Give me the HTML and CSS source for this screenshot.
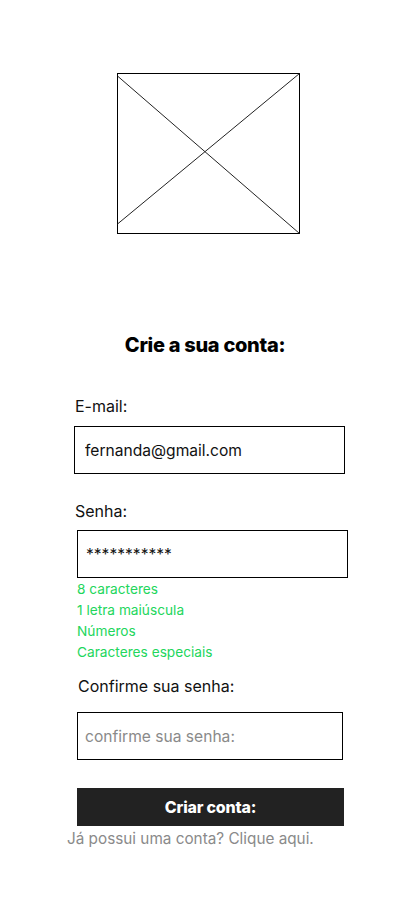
FILE: index.html
```html
<!DOCTYPE html>
<html lang="pt-BR">
<head>
<meta charset="utf-8">
<meta name="viewport" content="width=device-width, initial-scale=1">
<title>Crie a sua conta</title>
<link rel="stylesheet" href="styles.css">
</head>
<body>
<main class="page">
  <div class="logo">
    <svg class="logo-svg" viewBox="0 0 183 161" width="183" height="161" aria-hidden="true">
      <rect x="0.5" y="0.5" width="182" height="160" fill="none" stroke="#000" stroke-width="1"/>
      <line x1="0.5" y1="3" x2="182.5" y2="160.5" stroke="#222" stroke-width="1"/>
      <line x1="0.5" y1="151" x2="182.5" y2="0.5" stroke="#222" stroke-width="1"/>
    </svg>
  </div>

  <h1 class="title">Crie a sua conta:</h1>

  <form class="form">
    <label class="label label-email" for="email">E-mail:</label>
    <input class="field field-email" id="email" type="text" value="fernanda@gmail.com">

    <label class="label label-senha" for="senha">Senha:</label>
    <input class="field field-senha" id="senha" type="text" value="***********">
    <ul class="rules">
      <li>8 caracteres</li>
      <li>1 letra maiúscula</li>
      <li>Números</li>
      <li>Caracteres especiais</li>
    </ul>

    <label class="label label-confirm" for="confirm">Confirme sua senha:</label>
    <input class="field field-confirm" id="confirm" type="text" placeholder="confirme sua senha:">

    <button class="btn" type="button">Criar conta:</button>
    <p class="login">Já possui uma conta? Clique aqui.</p>
  </form>
</main>
</body>
</html>
```

FILE: styles.css
```css
* { box-sizing: border-box; }

html, body {
  margin: 0;
  padding: 0;
  background: #fff;
}

body {
  font-family: Inter, "Noto Sans", "Liberation Sans", sans-serif;
  color: #000;
  width: 412px;
}

.page {
  display: flex;
  flex-direction: column;
  padding-top: 73px;
}

.logo {
  margin-left: 117px;
  height: 161px;
}

.logo-svg { display: block; }

.title {
  margin: 99px 0 0 0;
  width: 410px;
  text-align: center;
  font-size: 20px;
  line-height: 24px;
  font-weight: 800;
  letter-spacing: -0.3px;
}

.form {
  display: flex;
  flex-direction: column;
  align-items: flex-start;
  margin: 0;
}

.label {
  display: block;
  font-size: 16px;
  line-height: 20px;
  color: #111;
}

.label-email { margin: 39px 0 0 75px; }
.label-senha { margin: 27px 0 0 75px; }
.label-confirm { margin: 13px 0 0 78px; }

.field {
  display: block;
  font-family: inherit;
  font-size: 15.6px;
  color: #111;
  border: 1px solid #000;
  border-radius: 0;
  background: #fff;
  outline: none;
  margin: 0;
}

.field::placeholder { color: #8a8a8a; }

.field-email {
  margin: 10px 0 0 74px;
  width: 271px;
  height: 48px;
  padding: 0 0 0 10px;
}

.field-senha {
  margin: 9px 0 0 77px;
  width: 271px;
  height: 48px;
  padding: 0 0 0 8px;
}

.field-confirm {
  margin: 16px 0 0 77px;
  width: 266px;
  height: 48px;
  padding: 0 0 0 7px;
}

.rules {
  list-style: none;
  margin: 1px 0 0 77px;
  padding: 0;
  color: #22d65c;
  font-size: 13.7px;
  line-height: 21px;
}

.btn {
  margin: 28px 0 0 77px;
  width: 267px;
  height: 38px;
  border: none;
  border-radius: 0;
  background: #222;
  color: #fff;
  font-family: inherit;
  font-size: 16px;
  font-weight: 800;
  letter-spacing: -0.2px;
  padding: 0;
}

.login {
  margin: 3px 0 0 67px;
  font-size: 15.3px;
  line-height: 20px;
  color: #8a8a8a;
}
```
